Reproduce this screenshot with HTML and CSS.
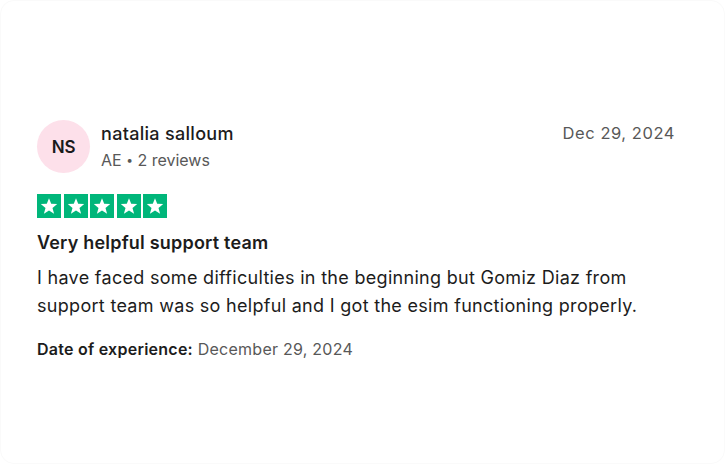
FILE: index.html
```html
<!DOCTYPE html>
<html>
<head>
<meta charset="utf-8">
<link rel="stylesheet" href="styles.css">
</head>
<body>
<article class="card">
  <header class="head">
    <div class="consumer">
      <div class="avatar">NS</div>
      <div class="info">
        <div class="name">natalia salloum</div>
        <div class="meta">AE <span class="dot">•</span> 2 reviews</div>
      </div>
    </div>
    <time class="date">Dec 29, 2024</time>
  </header>
  <div class="stars">
    <span class="star"><svg viewBox="0 0 24 24"><path d="M12 4.2l2.2 5.6 6 .3-4.7 3.8 1.6 5.8L12 16.4l-5.1 3.3 1.6-5.8-4.7-3.8 6-.3z" fill="#fff"/></svg></span>
    <span class="star"><svg viewBox="0 0 24 24"><path d="M12 4.2l2.2 5.6 6 .3-4.7 3.8 1.6 5.8L12 16.4l-5.1 3.3 1.6-5.8-4.7-3.8 6-.3z" fill="#fff"/></svg></span>
    <span class="star"><svg viewBox="0 0 24 24"><path d="M12 4.2l2.2 5.6 6 .3-4.7 3.8 1.6 5.8L12 16.4l-5.1 3.3 1.6-5.8-4.7-3.8 6-.3z" fill="#fff"/></svg></span>
    <span class="star"><svg viewBox="0 0 24 24"><path d="M12 4.2l2.2 5.6 6 .3-4.7 3.8 1.6 5.8L12 16.4l-5.1 3.3 1.6-5.8-4.7-3.8 6-.3z" fill="#fff"/></svg></span>
    <span class="star"><svg viewBox="0 0 24 24"><path d="M12 4.2l2.2 5.6 6 .3-4.7 3.8 1.6 5.8L12 16.4l-5.1 3.3 1.6-5.8-4.7-3.8 6-.3z" fill="#fff"/></svg></span>
  </div>
  <h2 class="title">Very helpful support team</h2>
  <p class="body">I have faced some difficulties in the beginning but Gomiz Diaz from support team was so helpful and I got the esim functioning properly.</p>
  <p class="exp"><b>Date of experience:</b> December 29, 2024</p>
</article>
</body>
</html>
```
FILE: styles.css
```css
html, body {
  margin: 0;
  padding: 0;
  background: #fff;
}
body {
  font-family: Inter, "Noto Sans", sans-serif;
  color: #1c1c1c;
}
.card {
  box-sizing: border-box;
  width: 725px;
  height: 464px;
  border-radius: 14px;
  border: 1px solid #fafafa;
  padding: 119px 49px 0 36px;
}
.head {
  display: flex;
  justify-content: space-between;
  align-items: flex-start;
}
.consumer {
  display: flex;
  gap: 11px;
}
.avatar {
  width: 53px;
  height: 53px;
  border-radius: 50%;
  background: #fde0ea;
  display: flex;
  align-items: center;
  justify-content: center;
  font-size: 17px;
  font-weight: 600;
  color: #1a1a1a;
  letter-spacing: -0.3px;
}
.info {
  padding-top: 2px;
}
.name {
  font-size: 18px;
  font-weight: 500;
  line-height: 24px;
  letter-spacing: 0.3px;
}
.meta {
  margin-top: 4px;
  font-size: 16px;
  line-height: 20px;
  color: #585858;
}
.dot {
  font-size: 12px;
  vertical-align: 2px;
}
.date {
  margin-top: 3px;
  font-size: 16.5px;
  line-height: 20px;
  letter-spacing: 0.55px;
  color: #585858;
}
.stars {
  display: flex;
  gap: 2.5px;
  margin-top: 21px;
}
.star {
  width: 24px;
  height: 24px;
  background: #00b67a;
  display: block;
}
.star svg {
  width: 24px;
  height: 24px;
  display: block;
}
.title {
  margin: 13px 0 0;
  font-size: 18px;
  font-weight: 600;
  line-height: 24px;
  letter-spacing: 0.2px;
}
.body {
  margin: 9px 0 0;
  font-size: 18px;
  line-height: 28px;
  letter-spacing: 0.3px;
}
.exp {
  margin: 19px 0 0;
  font-size: 16px;
  line-height: 20px;
  letter-spacing: 0.25px;
  color: #585858;
}
.exp b {
  font-weight: 600;
  color: #1c1c1c;
}
```
